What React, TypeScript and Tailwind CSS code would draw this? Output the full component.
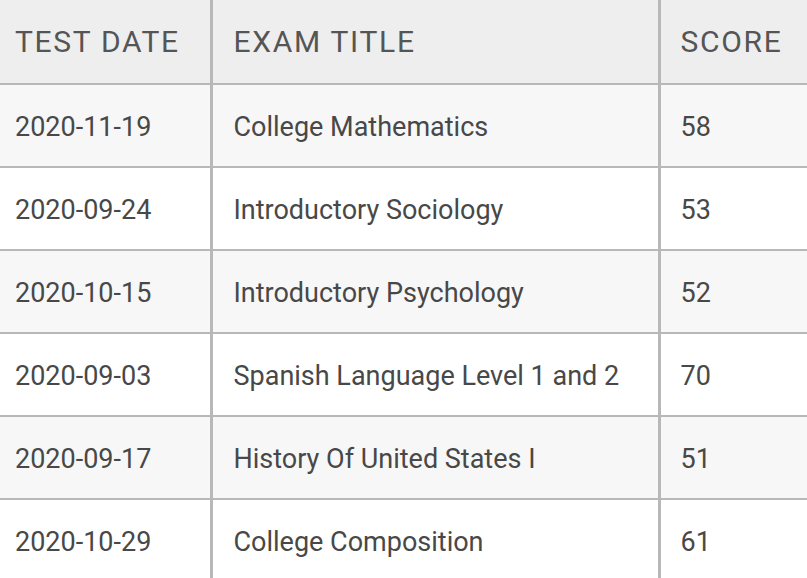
const rows = [
  { date: '2020-11-19', title: 'College Mathematics', score: '58' },
  { date: '2020-09-24', title: 'Introductory Sociology', score: '53' },
  { date: '2020-10-15', title: 'Introductory Psychology', score: '52' },
  { date: '2020-09-03', title: 'Spanish Language Level 1 and 2', score: '70' },
  { date: '2020-09-17', title: 'History Of United States I', score: '51' },
  { date: '2020-10-29', title: 'College Composition', score: '61' },
];

export default function App() {
  return (
    <div className="w-[807px] h-[578px] overflow-hidden bg-white font-['Roboto',sans-serif] text-[#484848]">
      <table className="w-full border-collapse">
        <thead>
          <tr className="bg-[#eeeeee] h-[84px] text-[30px] text-[#555555] tracking-[1.7px]">
            <th className="w-[211px] pl-[15px] text-left font-normal border-r-[3px] border-b-2 border-[#b8b8b8]">TEST DATE</th>
            <th className="w-[448px] pl-[21px] text-left font-normal border-r-[3px] border-b-2 border-[#b8b8b8]">EXAM TITLE</th>
            <th className="pl-[20px] text-left font-normal border-b-2 border-[#b8b8b8]">SCORE</th>
          </tr>
        </thead>
        <tbody>
          {rows.map((row, i) => (
            <tr key={i} className={`h-[83px] text-[27px] ${i % 2 === 0 ? 'bg-[#f7f7f7]' : 'bg-white'}`}>
              <td className="pl-[15px] pt-[3px] border-r-[3px] border-b-2 border-[#b8b8b8]">{row.date}</td>
              <td className="pl-[21px] pt-[3px] border-r-[3px] border-b-2 border-[#b8b8b8]">{row.title}</td>
              <td className="pl-[20px] pt-[3px] border-b-2 border-[#b8b8b8]">{row.score}</td>
            </tr>
          ))}
        </tbody>
      </table>
    </div>
  );
}
